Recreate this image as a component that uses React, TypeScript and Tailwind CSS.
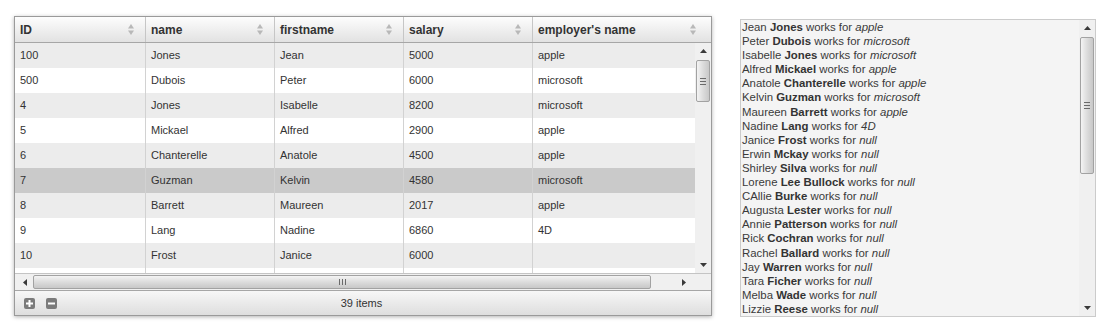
import React from "react";

interface Employee {
  id: string;
  name: string;
  firstname: string;
  salary: string;
  employer: string;
}

const rows: Employee[] = [
  { id: "100", name: "Jones", firstname: "Jean", salary: "5000", employer: "apple" },
  { id: "500", name: "Dubois", firstname: "Peter", salary: "6000", employer: "microsoft" },
  { id: "4", name: "Jones", firstname: "Isabelle", salary: "8200", employer: "microsoft" },
  { id: "5", name: "Mickael", firstname: "Alfred", salary: "2900", employer: "apple" },
  { id: "6", name: "Chanterelle", firstname: "Anatole", salary: "4500", employer: "apple" },
  { id: "7", name: "Guzman", firstname: "Kelvin", salary: "4580", employer: "microsoft" },
  { id: "8", name: "Barrett", firstname: "Maureen", salary: "2017", employer: "apple" },
  { id: "9", name: "Lang", firstname: "Nadine", salary: "6860", employer: "4D" },
  { id: "10", name: "Frost", firstname: "Janice", salary: "6000", employer: "" },
  // partially visible row below the fold, text is scrolled out of view
  { id: "", name: "", firstname: "", salary: "", employer: "" },
];

const people: [string, string, string][] = [
  ["Jean", "Jones", "apple"],
  ["Peter", "Dubois", "microsoft"],
  ["Isabelle", "Jones", "microsoft"],
  ["Alfred", "Mickael", "apple"],
  ["Anatole", "Chanterelle", "apple"],
  ["Kelvin", "Guzman", "microsoft"],
  ["Maureen", "Barrett", "apple"],
  ["Nadine", "Lang", "4D"],
  ["Janice", "Frost", "null"],
  ["Erwin", "Mckay", "null"],
  ["Shirley", "Silva", "null"],
  ["Lorene", "Lee Bullock", "null"],
  ["CAllie", "Burke", "null"],
  ["Augusta", "Lester", "null"],
  ["Annie", "Patterson", "null"],
  ["Rick", "Cochran", "null"],
  ["Rachel", "Ballard", "null"],
  ["Jay", "Warren", "null"],
  ["Tara", "Ficher", "null"],
  ["Melba", "Wade", "null"],
  ["Lizzie", "Reese", "null"],
];

const columns = [
  { label: "ID", w: "w-[131px]", hw: "w-[131px]", pr: "pr-[11px]" },
  { label: "name", w: "w-[129px]", hw: "w-[129px]", pr: "pr-[11px]" },
  { label: "firstname", w: "w-[129px]", hw: "w-[129px]", pr: "pr-[11px]" },
  { label: "salary", w: "w-[129px]", hw: "w-[129px]", pr: "pr-[11px]" },
  { label: "employer's name", w: "w-[162px]", hw: "w-[178px]", pr: "pr-[15px]" },
];

function SortIcon() {
  return (
    <svg width="6" height="11" viewBox="0 0 6 11">
      <path d="M3 0 L6 4.5 L0 4.5 Z" fill="#b8b8b8" />
      <path d="M0 6.5 L6 6.5 L3 11 Z" fill="#b8b8b8" />
    </svg>
  );
}

function Arrow({ dir }: { dir: "up" | "down" | "left" | "right" }) {
  const d = {
    up: "M0 4 L3.5 0 L7 4 Z",
    down: "M0 0 L7 0 L3.5 4 Z",
    left: "M4 0 L4 7 L0 3.5 Z",
    right: "M0 0 L4 3.5 L0 7 Z",
  }[dir];
  const vertical = dir === "up" || dir === "down";
  return (
    <svg width={vertical ? 7 : 4} height={vertical ? 4 : 7} viewBox={vertical ? "0 0 7 4" : "0 0 4 7"}>
      <path d={d} fill="#3a3a3a" />
    </svg>
  );
}

function GripV() {
  return (
    <div className="flex flex-col gap-[2px]">
      <div className="h-px w-[6px] bg-[#6a6a6a]" />
      <div className="h-px w-[6px] bg-[#6a6a6a]" />
      <div className="h-px w-[6px] bg-[#6a6a6a]" />
    </div>
  );
}

function GripH() {
  return (
    <div className="flex gap-[2px]">
      <div className="h-[6px] w-px bg-[#6a6a6a]" />
      <div className="h-[6px] w-px bg-[#6a6a6a]" />
      <div className="h-[6px] w-px bg-[#6a6a6a]" />
    </div>
  );
}

function VScroll({ thumbTop, thumbH }: { thumbTop: string; thumbH: string }) {
  return (
    <div className="flex h-full w-[16px] flex-col items-center bg-[#f0f0f0]">
      <div className="flex h-[14px] items-center justify-center pt-[2px]">
        <Arrow dir="up" />
      </div>
      <div className={`${thumbTop} ${thumbH} flex w-[14px] items-center justify-center rounded-[2px] border border-[#a2a2a2] bg-gradient-to-r from-[#f4f4f4] via-[#dcdcdc] to-[#c8c8c8]`}>
        <GripV />
      </div>
      <div className="flex-1" />
      <div className="flex h-[14px] items-center justify-center pb-[2px]">
        <Arrow dir="down" />
      </div>
    </div>
  );
}

function Grid() {
  return (
    <div className="flex h-[300px] w-[698px] flex-col border border-[#9a9a9a] bg-white shadow-[0_1px_4px_rgba(0,0,0,0.3)]">
      {/* header */}
      <div className="flex h-[26px] shrink-0 border-b border-[#a6a6a6] bg-gradient-to-b from-[#fdfdfd] to-[#e2e2e2]">
        {columns.map((c, i) => (
          <div
            key={c.label}
            className={`${c.hw} ${c.pr} flex items-center justify-between pl-[5px] ${i < columns.length - 1 ? "border-r border-[#c6c6c6]" : ""}`}
          >
            <span className="text-[12px] font-bold text-[#333]">{c.label}</span>
            <SortIcon />
          </div>
        ))}
      </div>

      {/* body */}
      <div className="flex h-[230px] shrink-0">
        <div className="h-full w-[680px] overflow-hidden">
          {rows.map((r, idx) => {
            const bg = idx === 5 ? "bg-[#cacaca]" : idx % 2 === 0 ? "bg-[#ececec]" : "bg-white";
            const vals = [r.id, r.name, r.firstname, r.salary, r.employer];
            return (
              <div key={idx} className={`flex h-[25px] ${bg}`}>
                {vals.map((v, i) => (
                  <div
                    key={i}
                    className={`${columns[i].w} flex items-center pl-[5px] text-[11px] text-[#333] ${i < 4 ? "border-r border-[#d2d2d2]" : ""}`}
                  >
                    {v}
                  </div>
                ))}
              </div>
            );
          })}
        </div>
        <VScroll thumbTop="mt-[3px]" thumbH="h-[42px]" />
      </div>

      {/* horizontal scrollbar */}
      <div className="flex h-[17px] shrink-0 border-t border-[#c4c4c4] bg-[#f0f0f0]">
        <div className="flex w-[680px] items-center">
          <div className="flex w-[18px] justify-center pl-[2px]">
            <Arrow dir="left" />
          </div>
          <div className="flex h-[14px] w-[618px] items-center justify-center rounded-[2px] border border-[#a2a2a2] bg-gradient-to-b from-[#f4f4f4] via-[#dcdcdc] to-[#c8c8c8]">
            <GripH />
          </div>
          <div className="flex-1" />
          <div className="flex w-[22px] justify-center">
            <Arrow dir="right" />
          </div>
        </div>
        <div className="w-[16px] bg-[#f0f0f0]" />
      </div>

      {/* footer */}
      <div className="flex h-[25px] shrink-0 items-center border-t border-[#a6a6a6] bg-gradient-to-b from-[#f7f7f7] to-[#dedede] pl-[9px]">
        <div className="flex gap-[11px]">
          <div className="flex h-[11px] w-[11px] items-center justify-center rounded-[2px] bg-[#7b7b7b]">
            <svg width="7" height="7" viewBox="0 0 7 7">
              <path d="M2.5 0 H4.5 V2.5 H7 V4.5 H4.5 V7 H2.5 V4.5 H0 V2.5 H2.5 Z" fill="#fff" />
            </svg>
          </div>
          <div className="flex h-[11px] w-[11px] items-center justify-center rounded-[2px] bg-[#7b7b7b]">
            <svg width="7" height="7" viewBox="0 0 7 7">
              <path d="M0 2.5 H7 V4.5 H0 Z" fill="#fff" />
            </svg>
          </div>
        </div>
        <div className="flex-1 pr-[45px] text-center text-[11px] text-[#333]">39 items</div>
      </div>
    </div>
  );
}

function PeopleList() {
  return (
    <div className="mt-[3px] flex h-[298px] w-[356px] border border-[#cbcbcb] bg-[#f4f4f4]">
      <div className="flex-1 overflow-hidden pl-[1px] text-[11.4px] leading-[14.1px] text-[#3a3a3a]">
        {people.map(([first, last, emp], i) => (
          <div key={i} className="whitespace-nowrap">
            {first} <b className="font-bold text-[#333]">{last}</b> works for <i>{emp}</i>
          </div>
        ))}
      </div>
      <VScroll thumbTop="mt-[3px]" thumbH="h-[137px]" />
    </div>
  );
}

export default function App() {
  return (
    <div
      className="flex h-[328px] w-[1110px] gap-[28px] bg-white pl-[14px] pt-[16px]"
      style={{ fontFamily: '"Liberation Sans", Arial, sans-serif' }}
    >
      <Grid />
      <PeopleList />
    </div>
  );
}
